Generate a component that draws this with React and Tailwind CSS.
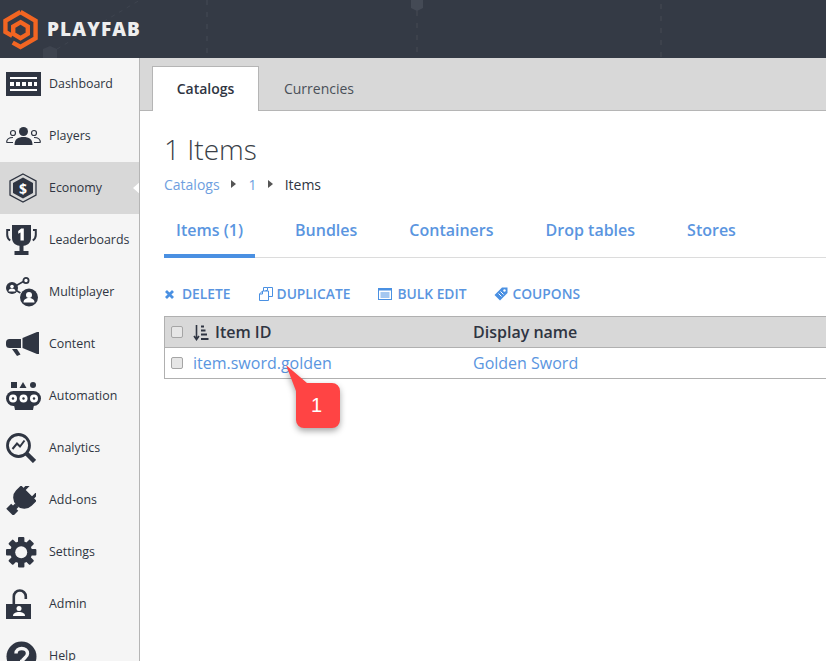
import React from "react";

const D = "#2f3542";

const icons = {
  Dashboard: (
    <svg width="35" height="25" viewBox="0 0 35 25">
      <rect x="0" y="0" width="35" height="24" fill={D} />
      <rect x="4" y="5" width="27" height="2" fill="#fff" />
      <rect x="4" y="17" width="27" height="2" fill="#fff" />
      <rect x="4" y="10" width="4" height="4" fill="#fff" />
      <rect x="10" y="10" width="4" height="4" fill="#fff" />
      <rect x="16" y="10" width="4" height="4" fill="#fff" />
      <rect x="22" y="10" width="4" height="4" fill="#fff" />
      <rect x="28" y="10" width="3" height="4" fill="#fff" />
    </svg>
  ),
  Players: (
    <svg width="35" height="18" viewBox="0 0 35 18">
      <circle cx="17.500" cy="4.500" r="4.500" fill={D} />
      <path d="M8.500 18c0-6 3.500-8 9-8s9 2 9 8z" fill={D} />
      <circle cx="7" cy="6" r="2.500" fill="none" stroke={D} strokeWidth="1.200" />
      <circle cx="28" cy="6" r="2.500" fill="none" stroke={D} strokeWidth="1.200" />
      <path d="M0.600 15.500c0-3 2.500-5 6.400-5M34.400 15.500c0-3-2.500-5-6.400-5M0.600 15.500H7M34.400 15.500H28" fill="none" stroke={D} strokeWidth="1.200" />
    </svg>
  ),
  Economy: (
    <svg className="ml-[3px]" width="28" height="30" viewBox="0 0 28 30">
      <path d="M14 1 27 8v14l-13 7-13-7V8z" fill="none" stroke={D} strokeWidth="1.300" />
      <path d="M14 4.500 24 10v10l-10 5.500L4 20V10z" fill={D} />
      <text x="14" y="20.500" textAnchor="middle" fill="#fff" fontSize="14" fontWeight="700" fontFamily="Open Sans, sans-serif">$</text>
    </svg>
  ),
  Leaderboards: (
    <svg width="31" height="30" viewBox="0 0 31 30">
      <path d="M6 0h19v13c0 5-4 8-9.500 8S6 18 6 13z" fill={D} />
      <rect x="13.500" y="20" width="4" height="6" fill={D} />
      <rect x="8.500" y="26" width="14" height="4" fill={D} />
      <path d="M4 5H1.200v5c0 2.500 1 4 3 5.500M27 5h2.800v5c0 2.500-1 4-3 5.500" fill="none" stroke={D} strokeWidth="2" />
      <path d="M17.800 3.500v12h-3.300V7.500l-2.300 1.200V6l3-2.500z" fill="#fff" />
    </svg>
  ),
  Multiplayer: (
    <svg width="33" height="31" viewBox="0 0 33 31">
      <path d="M6 11 20 3M6 11l17 10" stroke={D} strokeWidth="1.500" />
      <circle cx="6" cy="11" r="6" fill={D} />
      <circle cx="6" cy="9.500" r="1.800" fill="#fff" />
      <path d="M2.500 14.500c0-2 1.500-3 3.500-3s3.500 1 3.500 3z" fill="#fff" />
      <circle cx="20" cy="3.500" r="2.600" fill="#fff" stroke={D} strokeWidth="1.800" />
      <circle cx="23" cy="20.500" r="9.800" fill="#f5f5f5" />
      <circle cx="23" cy="20.500" r="9" fill={D} />
      <circle cx="23" cy="18" r="3" fill="#fff" />
      <path d="M17.500 25.500c0-3 2.500-4.500 5.500-4.500s5.500 1.500 5.500 4.500z" fill="#fff" />
    </svg>
  ),
  Content: (
    <svg width="33" height="24" viewBox="0 0 33 24">
      <path d="M0 10.500Q0 7 3.500 7H15v9H3.500Q0 16 0 12.500z" fill={D} />
      <path d="M6 17h5l3.500 5.500-3.500 1.500z" fill={D} />
      <path d="M16.500 6 31 0v22l-14.500-6z" fill={D} />
      <rect x="31" y="0" width="2" height="22" fill={D} />
    </svg>
  ),
  Automation: (
    <svg width="35" height="28" viewBox="0 0 35 28">
      <rect x="5" y="0" width="6" height="6" fill={D} />
      <path d="M17 0 20.500 6h-7z" fill={D} />
      <circle cx="27" cy="3" r="3" fill={D} />
      <rect x="0" y="9" width="35" height="15" rx="7.500" fill={D} />
      <path d="M8 23h20l-1 5H9z" fill={D} />
      <circle cx="7" cy="16.500" r="4" fill="#fff" />
      <circle cx="17.500" cy="16.500" r="4" fill="#fff" />
      <circle cx="28" cy="16.500" r="4" fill="#fff" />
      <circle cx="7" cy="16.500" r="1.200" fill={D} />
      <circle cx="17.500" cy="16.500" r="1.200" fill={D} />
      <circle cx="28" cy="16.500" r="1.200" fill={D} />
    </svg>
  ),
  Analytics: (
    <svg width="30" height="30" viewBox="0 0 30 30">
      <circle cx="12.500" cy="12.500" r="11" fill="none" stroke={D} strokeWidth="2.800" />
      <path d="M20.500 20.500 28.500 28.500" stroke={D} strokeWidth="4.500" />
      <path d="M6.500 16 11 10.500l3 3L18.500 7.500" fill="none" stroke={D} strokeWidth="2" />
    </svg>
  ),
  "Add-ons": (
    <svg width="30" height="29" viewBox="-15 -14.500 30 29">
      <g transform="translate(1.500 -1) rotate(45)" fill={D}>
        <rect x="-7.500" y="-16" width="3" height="8" />
        <rect x="4.500" y="-16" width="3" height="8" />
        <path d="M-11-9H11V-2A11 10.500 0 0 1-11-2Z" />
        <rect x="-2.500" y="8" width="5" height="4" />
        <rect x="-5" y="11" width="10" height="7" />
      </g>
    </svg>
  ),
  Settings: (
    <svg width="31" height="31" viewBox="0 0 31 31">
      <g fill={D}>
        <circle cx="15.200" cy="15.200" r="11" />
        {[0, 45, 90, 135, 180, 225, 270, 315].map((a) => (
          <rect key={a} x="12" y="0" width="6.400" height="7" rx="1" transform={`rotate(${a} 15.200 15.200)`} />
        ))}
      </g>
      <circle cx="15.200" cy="15.200" r="6" fill="#f5f5f5" />
    </svg>
  ),
  Admin: (
    <svg width="25" height="30" viewBox="0 0 25 30">
      <path d="M7.800 15V7.500a6 6 0 0 1 12 0v2.500" fill="none" stroke={D} strokeWidth="2.600" />
      <rect x="0" y="15" width="25" height="15" fill={D} />
      <circle cx="13" cy="19.500" r="2.500" fill="#fff" />
      <path d="M7 27c0-3 3-4 6-4s6 1 6 4z" fill="#fff" />
    </svg>
  ),
  Help: (
    <svg width="31" height="31" viewBox="0 0 31 31">
      <circle cx="15.500" cy="15.500" r="15" fill={D} />
      <path d="M10 12.500c0-3 2.500-5 5.700-5s5.800 2 5.800 5c0 4.500-5 4-5 8h-2.500" fill="none" stroke="#f5f5f5" strokeWidth="3.400" />
    </svg>
  ),
};

const nav = ["Dashboard", "Players", "Economy", "Leaderboards", "Multiplayer", "Content", "Automation", "Analytics", "Add-ons", "Settings", "Admin", "Help"];

function NavItem({ label }) {
  const active = label === "Economy";
  return (
    <div className={`relative flex h-[52px] shrink-0 items-center ${active ? "bg-[#d8d8d8]" : ""}`}>
      <div className="flex w-[49px] shrink-0 justify-start pl-[6px]">{icons[label]}</div>
      <span className="text-[12.4px] font-normal text-[#2f3542]">{label}</span>
      {active && (
        <span className="absolute right-[-1px] top-[20px] h-0 w-0 border-y-[6px] border-r-[7px] border-y-transparent border-r-white" />
      )}
    </div>
  );
}

function Caret({ className }) {
  return <span className={`inline-block h-0 w-0 border-y-[4px] border-l-[5px] border-y-transparent border-l-[#555555] ${className}`} />;
}

function Checkbox() {
  return <span className="h-[12px] w-[12px] shrink-0 rounded-[2px] border border-[#a5a5a5] bg-[#e6e6e6]" />;
}

const actionIcons = {
  del: (
    <svg width="11" height="11" viewBox="0 0 11 11"><path d="M2 2l7 7M9 2l-7 7" stroke="#4a90e2" strokeWidth="2.800" /></svg>
  ),
  dup: (
    <svg width="14" height="14" viewBox="0 0 14 14" fill="none" stroke="#4a90e2" strokeWidth="1">
      <path d="M4.500 4V0.500h4v3h-2M8.500 0.500h5v9h-4" />
      <path d="M0.500 7l3-3h6v9.500h-9z" />
      <path d="M0.500 7h3V4" />
    </svg>
  ),
  bulk: (
    <svg width="14" height="12" viewBox="0 0 14 12">
      <rect x="0.500" y="0.500" width="13" height="11" fill="none" stroke="#4a90e2" />
      <rect x="0.500" y="0.500" width="13" height="2" fill="#4a90e2" />
      <path d="M2.500 5h9M2.500 7h9M2.500 9h9" stroke="#4a90e2" />
    </svg>
  ),
  cou: (
    <svg width="14" height="14" viewBox="0 0 14 14">
      <path d="M8 0.500h5.500V6L6 13.500 0.500 8z" fill="#4a90e2" />
      <circle cx="10.500" cy="3.500" r="1.200" fill="#fff" />
      <path d="M4.500 6.500 7.500 9.500M6.500 4.500 9.500 7.500" stroke="#fff" />
    </svg>
  ),
};

function Action({ icon, label, gap }) {
  return (
    <span className={`flex items-center ${gap}`}>
      {actionIcons[icon]}
      <span className="text-[13.8px] font-semibold text-[#5a95e0]">{label}</span>
    </span>
  );
}

export default function App() {
  return (
    <div className="relative flex h-[661px] w-[826px] flex-col overflow-hidden bg-white font-['Open_Sans',sans-serif]">
      <header className="relative flex h-[58px] shrink-0 items-center bg-[#343a45] pl-[3px]">
        <svg className="absolute left-0 top-0" width="826" height="58" viewBox="0 0 826 58" fill="none">
          <path d="M207 0v58" stroke="#3f4550" strokeWidth="1.500" strokeDasharray="5 7" />
          <path d="M417 11v47" stroke="#40464f" strokeWidth="1.500" strokeDasharray="5 7" />
          <path d="M661 4v54" stroke="#40464f" strokeWidth="1.500" strokeDasharray="5 7" />
          <path d="M411 0h12v8l-6 3-6-3z" fill="#444a55" />
          <path d="M43 49l7-3 7 3v9H43z" fill="#3e444f" />
          <path d="M57 49 140 0" stroke="#3e444f" strokeWidth="1" strokeDasharray="4 5" />
        </svg>
        <svg className="relative" width="35" height="41" viewBox="0 0 36 41" fill="none">
          <path d="M18 2.500 33.500 11.500v18L18 38.500l-8-4.500" stroke="#f26522" strokeWidth="4.500" />
          <path d="M18 2.500 2.500 11.500v11.500l7 4" stroke="#f26522" strokeWidth="4.500" />
          <path d="M18 13l7.500 4.500v7.500L18 29.500 10.500 25v-7.500z" stroke="#f26522" strokeWidth="4.500" />
        </svg>
        <span className="relative ml-[9px] mt-[1px] text-[19px] font-extrabold tracking-[1.100px] text-[#eeeeee]">PLAYFAB</span>
      </header>

      <div className="flex min-h-0 flex-1">
        <nav className="flex w-[140px] shrink-0 flex-col overflow-hidden border-r border-[#b5b5b5] bg-[#f5f5f5]">
          {nav.map((n) => (
            <NavItem key={n} label={n} />
          ))}
        </nav>

        <main className="min-w-0 flex-1 overflow-hidden">
          <div className="flex h-[53px] items-end border-b border-[#b5b5b5] bg-[#d8d8d8] pl-[12px]">
            <div className="-mb-px flex h-[45px] w-[107px] items-center justify-center border-x border-t border-[#b5b5b5] bg-white pb-[1px] text-[14px] font-semibold text-[#2f3542]">
              Catalogs
            </div>
            <div className="flex h-[44px] w-[120px] items-center justify-center text-[14px] text-[#4a5058]">Currencies</div>
          </div>

          <div className="px-[24px] pt-[18px]">
            <h1 className="text-[28px] font-light leading-[40px] text-[#3a3f48]">1 Items</h1>
            <div className="mt-[5px] flex h-[20px] items-center text-[14px] text-[#2f3542]">
              <span className="text-[#6f9fe0]">Catalogs</span>
              <Caret className="ml-[11px] mr-[13px]" />
              <span className="text-[#6f9fe0]">1</span>
              <Caret className="ml-[11px] mr-[12px]" />
              <span>Items</span>
            </div>
          </div>

          <div className="ml-[24px] mt-[14px] flex h-[50px] border-b border-[#dcdcdc]">
            <div className="-mb-px flex h-[50px] w-[91px] items-center justify-center border-b-4 border-[#4a90e2] pb-[3px] text-[16px] font-semibold text-[#5a95e0]">Items (1)</div>
            {[
              ["Bundles", "ml-[40px]"],
              ["Containers", "ml-[52px]"],
              ["Drop tables", "ml-[52px]"],
              ["Stores", "ml-[52px]"],
            ].map(([t, m]) => (
              <div key={t} className={`flex h-[49px] items-center pb-[6px] text-[16px] font-semibold text-[#5a95e0] ${m}`}>{t}</div>
            ))}
          </div>

          <div className="ml-[24px] mt-[26px] flex h-[20px] items-center">
            <Action icon="del" label="DELETE" gap="gap-[7px]" />
            <span className="ml-[28px]"><Action icon="dup" label="DUPLICATE" gap="gap-[4px]" /></span>
            <span className="ml-[28px]"><Action icon="bulk" label="BULK EDIT" gap="gap-[5px]" /></span>
            <span className="ml-[28px]"><Action icon="cou" label="COUPONS" gap="gap-[4px]" /></span>
          </div>

          <div className="ml-[24px] mr-[-10px] mt-[12px] border border-[#b0b0b0]">
            <div className="flex h-[31px] items-center border-b border-[#b0b0b0] bg-[#d8d8d8] pl-[6px] text-[16px] font-semibold text-[#2f3542]">
              <Checkbox />
              <svg className="ml-[10px]" width="16" height="17" viewBox="0 0 16 17" fill="none" stroke="#2f3542">
                <path d="M3.500 1v14M1 12l2.500 3.500L6 12" strokeWidth="1.600" />
                <path d="M8 2.500h3M8 6.500h4.500M8 10.500h6M8 15h7.500" strokeWidth="2" />
              </svg>
              <span className="ml-[6px] w-[258px]">Item ID</span>
              <span>Display name</span>
            </div>
            <div className="flex h-[30px] items-center pl-[6px] text-[16px] text-[#5a95e0]">
              <Checkbox />
              <span className="ml-[10px] w-[280px]">item.sword.golden</span>
              <span>Golden Sword</span>
            </div>
          </div>
        </main>
      </div>

      <div className="pointer-events-none absolute left-[280px] top-[363px]">
        <svg className="absolute left-0 top-0 drop-shadow-[0_3px_3px_rgba(0,0,0,0.35)]" width="62" height="70" viewBox="0 0 62 70">
          <path d="M6 2 27 20H52a8 8 0 0 1 8 8V57a8 8 0 0 1-8 8H24a8 8 0 0 1-8-8V28z" fill="#ff4444" />
        </svg>
        <span className="absolute left-[31px] top-[29px] font-['Liberation_Sans',sans-serif] text-[20px] leading-[26px] text-white">1</span>
      </div>
    </div>
  );
}
